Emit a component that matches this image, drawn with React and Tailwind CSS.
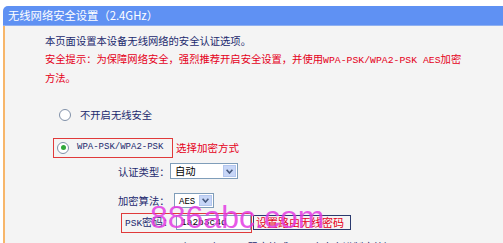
import React from 'react';

const cjk = { fontFamily: '"SimSun","Noto Sans CJK SC",sans-serif' };
const mono = "font-['Liberation_Mono']";

const Radio = ({ checked }) => (
    <span className="w-[12px] h-[12px] rounded-full border border-[#8090a8] bg-white flex items-center justify-center shrink-0">
        {checked && <span className="w-[5px] h-[5px] rounded-full bg-[#31a83a]" />}
    </span>
);

const Select = ({ children, width, height }) => (
    <div className={`flex items-center border border-[#7f9db9] bg-white ${width} ${height}`}>
        <span className="flex-1 pl-[4px] text-black leading-none">{children}</span>
        <span className="w-[13px] h-[calc(100%-2px)] mr-[1px] bg-[#c7d6f7] border border-[#b3c6ee] flex items-center justify-center">
            <svg width="7" height="5" viewBox="0 0 7 5"><path d="M0.6 0.8 L3.5 4 L6.4 0.8" fill="none" stroke="#46597e" strokeWidth="1.6" /></svg>
        </span>
    </div>
);

export default function App() {
    return (
        <div className="w-[503px] h-[243px] bg-white overflow-hidden relative text-[10.3px] whitespace-nowrap" style={cjk}>
            <div className="pt-[6px] pl-[3px]">
                {/* Header bar */}
                <div className="h-[20px] bg-[#5f91f3] rounded-tl-[5px] border-b border-[#8fb0f0] flex items-center pl-[5px] text-white text-[11.3px] leading-none">
                    无线网络安全设置（2.4GHz）
                </div>

                {/* Body */}
                <div className="h-[300px] bg-[#f4f4f4] border-l-2 border-[#f7b66a] pl-[40px] pt-[6px] leading-[17.5px]">
                    <div className="text-[#1c2a6e]">本页面设置本设备无线网络的安全认证选项。</div>
                    <div className="text-[#e5001a]">
                        安全提示：为保障网络安全，强烈推荐开启安全设置，并使用<span className={`${mono} text-[9.8px]`}>WPA-PSK/WPA2-PSK AES</span>加密
                    </div>
                    <div className="text-[#e5001a]">方法。</div>

                    <div className="mt-[21px] ml-[14px] h-[14px] flex items-center gap-[9px] text-[#1c2a6e]">
                        <Radio />
                        <span>不开启无线安全</span>
                    </div>

                    <div className="mt-[16px] ml-[8px] flex items-center gap-[3px]">
                        <div className="h-[20px] w-[120px] border border-[#e03a3a] flex items-center gap-[8px] pl-[3px]">
                            <Radio checked />
                            <span className={`text-[#1c2a6e] ${mono} text-[9px]`}>WPA-PSK/WPA2-PSK</span>
                        </div>
                        <span className="text-[#e5001a] text-[10.5px]">选择加密方式</span>
                    </div>

                    <div className="mt-[5px] ml-[73px] flex items-center gap-[2px] text-[#1c2a6e]">
                        <span className="w-[50px]">认证类型：</span>
                        <Select width="w-[68px]" height="h-[16px]">自动</Select>
                    </div>

                    <div className="mt-[12px] ml-[73px] flex items-center gap-[4px] text-[#1c2a6e]">
                        <span className="w-[52px]">加密算法：</span>
                        <Select width="w-[40px]" height="h-[15px]"><span className={`${mono} text-[9px]`}>AES</span></Select>
                    </div>

                    <div className="mt-[3px] ml-[76px] flex items-center">
                        <div className="h-[20px] w-[131px] border border-[#e03a3a] flex items-center pl-[3px] gap-[1px]">
                            <span className="text-[#1c2a6e] w-[50px]"><span className={`${mono} text-[9.5px]`}>PSK</span>密码：</span>
                            <span className={`h-[15px] flex-1 border border-[#7f9db9] bg-white ${mono} text-[9.5px] text-black pl-[4px] leading-[13px]`}>1a2b3c4d</span>
                        </div>
                        <div className="h-[15px] w-[98px] ml-[1px] border border-[#2b3a6e] flex items-center pl-[2px] text-[#e5001a] text-[11px] leading-none">设置路由无线密码</div>
                    </div>

                    <div className="mt-[5px] ml-[131px] text-[#1c2a6e]">（<span className={`${mono} text-[9.5px]`}>8-63</span>个<span className={`${mono} text-[9.5px]`}>ASCII</span>码字符或<span className={`${mono} text-[9.5px]`}>8-64</span>个十六进制字符）</div>
                </div>
            </div>

            {/* Watermark */}
            <div className="absolute left-[150px] top-[201px] text-[32px] leading-[32px] text-[#e33be3]/85 font-['Liberation_Sans'] pointer-events-none">
                886abc.com
            </div>
        </div>
    );
}
